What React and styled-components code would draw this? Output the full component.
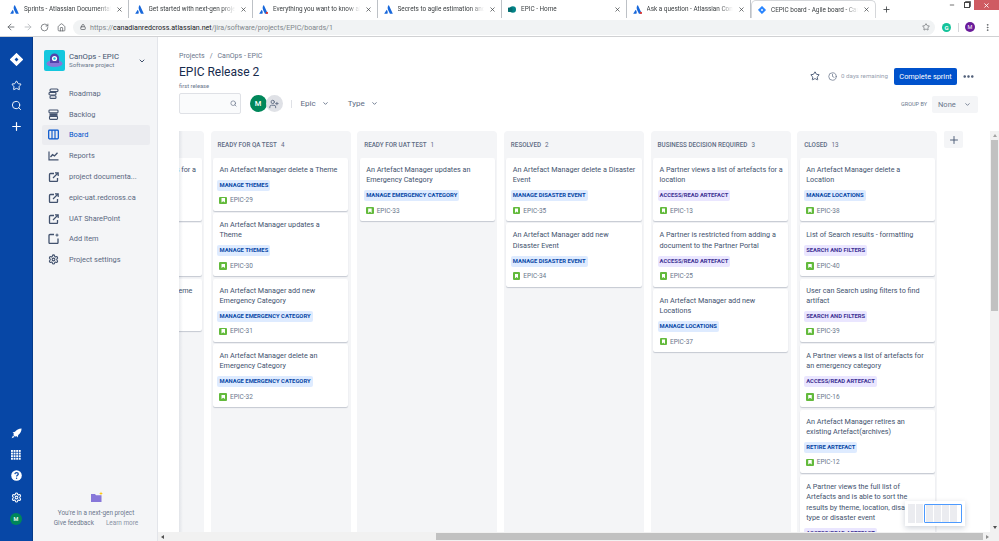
import React from 'react';
import styled, { createGlobalStyle } from 'styled-components';
import { ArrowLeft, ArrowRight, RotateCw, Home, Lock, Star, MoreVertical, MoreHorizontal, Plus, X, Search, ChevronDown, Settings, Minus, Clock, UserPlus } from 'lucide-react';

const Global = createGlobalStyle`
  html, body {
    margin: 0;
    padding: 0;
    height: 100%;
    overflow: hidden;
    background: #fff;
  }
  * { box-sizing: border-box; }
`;

const Page = styled.div`
  width: 999px;
  height: 541px;
  display: flex;
  flex-direction: column;
  overflow: hidden;
  font-family: Roboto, "Noto Sans", sans-serif;
  color: #42526e;
  filter: blur(0.4px);
`;

/* browser chrome */
const TabStrip = styled.div`
  height: 18px;
  display: flex;
  align-items: stretch;
  padding-left: 4px;
  background: #fff;
  flex: none;
`;
const Tab = styled.div`
  width: 124.5px;
  padding: 0 5px 0 6px;
  display: flex;
  align-items: center;
  gap: 5px;
  font-size: 6.4px;
  color: #3c4043;
  white-space: nowrap;
  border-right: 1px solid ${p => (p.$active ? 'transparent' : '#bdc1c6')};
  ${p => p.$active && 'border: 1px solid #d5d7da; border-bottom: none; border-radius: 5px 5px 0 0;'}
`;
const TabTitle = styled.span`
  flex: 1;
  overflow: hidden;
  -webkit-mask-image: linear-gradient(to right, #000 85%, transparent);
  mask-image: linear-gradient(to right, #000 85%, transparent);
`;
const NewTab = styled.div`
  width: 22px;
  display: flex;
  align-items: center;
  justify-content: center;
  color: #3c4043;
`;
const WindowControls = styled.div`
  margin-left: auto;
  display: flex;
  align-items: flex-start;
  color: #555;
`;
const WinButton = styled.div`
  width: ${p => (p.$close ? '25px' : '15px')};
  height: 10px;
  display: flex;
  align-items: center;
  justify-content: center;
  color: ${p => (p.$close ? '#fff' : '#444')};
  background: ${p => (p.$close ? '#cf5b62' : 'transparent')};
`;
const RestoreGlyph = styled.span`
  width: 6px;
  height: 6px;
  border: 1px solid #444;
  box-shadow: 1px -1px 0 -0.2px #444;
`;
const Toolbar = styled.div`
  height: 19px;
  flex: none;
  display: flex;
  align-items: center;
  padding: 0 6px 0 3px;
  background: #fff;
  border-bottom: 1px solid #d0d1d3;
`;
const NavButton = styled.div`
  width: 16.6px;
  display: flex;
  justify-content: center;
  color: ${p => (p.$off ? '#b5b8bc' : '#5f6368')};
`;
const Omnibox = styled.div`
  flex: 1;
  height: 15px;
  margin-left: 3.6px;
  border-radius: 8px;
  background: #f1f3f4;
  display: flex;
  align-items: center;
  padding: 0 5px 0 7px;
  gap: 4px;
  font-size: 7.1px;
  color: #80868b;
  white-space: nowrap;
`;
const Host = styled.span`
  color: #202124;
`;
const UrlStar = styled.div`
  margin-left: auto;
  display: flex;
  color: #5f6368;
`;
const ToolbarRight = styled.div`
  width: 58px;
  display: flex;
  align-items: center;
  padding-left: 7px;
  color: #5f6368;
`;
const Grammarly = styled.div`
  width: 9px;
  height: 9px;
  border-radius: 50%;
  background: #15c39a;
  color: #fff;
  font-size: 6px;
  font-weight: 700;
  line-height: 9px;
  text-align: center;
`;
const ToolbarSep = styled.div`
  width: 1px;
  height: 9px;
  background: #d5d7da;
  margin: 0 6.5px;
`;
const ProfileDot = styled.div`
  width: 10px;
  height: 10px;
  border-radius: 50%;
  background: #6a1b9a;
  color: #fff;
  font-size: 5.5px;
  line-height: 10px;
  text-align: center;
  margin-right: 8px;
`;

/* app shell */
const Shell = styled.div`
  flex: 1;
  min-height: 0;
  display: flex;
`;
const Rail = styled.nav`
  width: 33px;
  flex: none;
  background: #0747a6;
  border-right: 1px solid #053a8a;
  display: flex;
  flex-direction: column;
  justify-content: space-between;
  align-items: center;
  padding: 16px 0 16px;
  color: #fff;
`;
const RailGroup = styled.div`
  display: flex;
  flex-direction: column;
  align-items: center;
  gap: ${p => p.$gap}px;
`;
const RailLogo = styled.div`
  display: flex;
  margin-bottom: 5px;
`;
const RailAvatar = styled.div`
  width: 12px;
  height: 12px;
  border-radius: 50%;
  background: #00875a;
  color: #fff;
  font-size: 5.5px;
  font-weight: 500;
  line-height: 12px;
  text-align: center;
`;
const Sidebar = styled.aside`
  width: 125px;
  flex: none;
  background: #f4f5f7;
  border-right: 1px solid #e3e5ea;
  padding: 13px 7px 0 9px;
  display: flex;
  flex-direction: column;
`;
const ProjectHead = styled.div`
  display: flex;
  align-items: center;
  padding-left: 2px;
  margin-bottom: 12.3px;
`;
const ProjectIcon = styled.div`
  width: 21px;
  height: 21px;
  flex: none;
  border-radius: 2px;
  background: #14c7de;
  margin-right: 4px;
`;
const ProjectText = styled.div`
  flex: 1;
  line-height: 8px;
`;
const ProjectName = styled.div`
  font-size: 7.8px;
  color: #42526e;
`;
const ProjectType = styled.div`
  font-size: 6.2px;
  color: #6b778c;
`;
const ProjectChevron = styled.div`
  display: flex;
  color: #42526e;
  margin-right: 4px;
`;
const NavList = styled.div`
  display: flex;
  flex-direction: column;
  gap: 0.8px;
`;
const NavItem = styled.div`
  height: 20px;
  display: flex;
  align-items: center;
  gap: 10px;
  padding-left: 6px;
  border-radius: 2px;
  font-size: 7.4px;
  white-space: nowrap;
  color: ${p => (p.$active ? '#0052cc' : '#5a6881')};
  background: ${p => (p.$active ? '#ebecf0' : 'transparent')};
`;
const NavIcon = styled.svg`
  width: 11px;
  height: 11px;
  flex: none;
  color: ${p => (p.$active ? '#0052cc' : '#42526e')};
`;
const SideFooter = styled.div`
  margin-top: auto;
  padding-bottom: 13.5px;
  display: flex;
  flex-direction: column;
  align-items: center;
  font-size: 6.4px;
  color: #6b778c;
  line-height: 10px;
`;
const FooterNote = styled.div`
  margin-top: 5px;
`;
const FooterLinks = styled.div`
  display: flex;
  gap: 12px;
`;
const FooterLink = styled.span`
  color: ${p => (p.$light ? '#8993a4' : '#6b778c')};
`;

/* main area */
const Main = styled.main`
  flex: 1;
  min-width: 0;
  min-height: 0;
  display: flex;
  flex-direction: column;
  background: #fff;
`;
const Header = styled.header`
  height: 94px;
  flex: none;
  padding: 14px 27px 0 21px;
  display: flex;
  justify-content: space-between;
`;
const HeaderLeft = styled.div`
  display: flex;
  flex-direction: column;
`;
const Crumbs = styled.div`
  font-size: 7px;
  line-height: 10px;
  color: #6b778c;
  display: flex;
  gap: 5px;
`;
const Title = styled.h1`
  margin: 4px 0 0;
  font-size: 12px;
  font-weight: 400;
  line-height: 14px;
  color: #172b4d;
`;
const SubTitle = styled.div`
  margin-top: 2.5px;
  font-size: 5.8px;
  line-height: 8px;
  color: #6b778c;
`;
const Filters = styled.div`
  margin-top: 3.5px;
  display: flex;
  align-items: center;
`;
const SearchBox = styled.div`
  width: 62px;
  height: 21px;
  border: 1px solid #dfe1e6;
  border-radius: 2px;
  background: #fafbfc;
  display: flex;
  align-items: center;
  justify-content: flex-end;
  padding-right: 3px;
  color: #6b778c;
  margin-right: 8.5px;
`;
const Avatar = styled.div`
  width: 17px;
  height: 17px;
  border-radius: 50%;
  background: #00875a;
  color: #fff;
  font-size: 7.5px;
  font-weight: 500;
  line-height: 17px;
  text-align: center;
`;
const AddPeople = styled.div`
  width: 17px;
  height: 17px;
  margin-left: -1px;
  border-radius: 50%;
  background: #dfe1e6;
  color: #6b778c;
  display: flex;
  align-items: center;
  justify-content: center;
`;
const FilterDivider = styled.div`
  width: 1px;
  height: 8px;
  background: #dfe1e6;
  margin: 0 9px 0 8px;
`;
const FilterButton = styled.div`
  display: flex;
  align-items: center;
  gap: 6.5px;
  font-size: 8px;
  color: #5e6c84;
  margin-right: 18.5px;
`;
const HeaderRight = styled.div`
  display: flex;
  flex-direction: column;
  align-items: flex-end;
  padding-top: 16.5px;
`;
const Actions = styled.div`
  display: flex;
  align-items: center;
`;
const Remaining = styled.div`
  display: flex;
  align-items: center;
  gap: 4px;
  margin-left: 8px;
  font-size: 6.2px;
  color: #97a0af;
`;
const Primary = styled.div`
  width: 63px;
  height: 17px;
  margin-left: 6px;
  border-radius: 2px;
  background: #0052cc;
  color: #fff;
  font-size: 7.4px;
  line-height: 17px;
  text-align: center;
`;
const More = styled.div`
  display: flex;
  margin-left: 4.5px;
  margin-right: -2.5px;
  color: #42526e;
`;
const GroupBy = styled.div`
  margin-top: 11px;
  display: flex;
  align-items: center;
  gap: 5px;
  font-size: 5.5px;
  color: #6b778c;
  margin-right: -6px;
`;
const NoneSelect = styled.div`
  width: 46px;
  height: 17px;
  border-radius: 2px;
  background: #f4f5f7;
  font-size: 7.5px;
  color: #6b778c;
  display: flex;
  align-items: center;
  justify-content: space-between;
  padding: 0 7px 0 6px;
`;

const MainWrap = styled.div`
  flex: 1;
  min-height: 0;
  position: relative;
  display: flex;
`;
const BoardRow = styled.div`
  flex: 1;
  min-width: 0;
  min-height: 0;
  display: flex;
`;
const Gutter = styled.div`
  width: ${p => p.$width}px;
  flex: none;
`;
const Board = styled.div`
  flex: 1;
  min-width: 0;
  display: flex;
  align-items: stretch;
  gap: 6.7px;
  overflow: hidden;
  position: relative;
  &::before {
    content: "";
    position: absolute;
    z-index: 1;
    left: 0;
    top: 0;
    bottom: 0;
    width: 4px;
    background: linear-gradient(to right, rgba(9, 30, 66, 0.08), transparent);
  }
`;
const Column = styled.section`
  width: 140px;
  flex: none;
  background: #f4f5f7;
  border-radius: 4px 4px 0 0;
  padding: 0 2.3px;
  overflow: hidden;
  &:first-child {
    margin-left: -115px;
  }
`;
const ColumnHead = styled.div`
  height: 27px;
  padding-left: 4.5px;
  display: flex;
  align-items: center;
  gap: 4px;
  font-size: 6.3px;
  font-weight: 500;
  color: #5e6c84;
  white-space: nowrap;
`;
const ColumnCount = styled.span`
  font-weight: 400;
`;
const CardStack = styled.div`
  display: flex;
  flex-direction: column;
  gap: 2.3px;
`;
const Card = styled.article`
  flex: none;
  background: #fff;
  border-radius: 2px;
  box-shadow: 0 1px 1px rgba(9, 30, 66, 0.2);
  padding: 7px 5.2px 6px 4.5px;
`;
const CardTitle = styled.div`
  padding-left: 2px;
  font-size: 7.22px;
  line-height: 10.35px;
  color: #42526e;
`;
const Tag = styled.div`
  width: fit-content;
  margin-top: 4.5px;
  height: 11px;
  padding: 0 2px;
  border-radius: 2px;
  font-size: 5.85px;
  font-weight: 700;
  line-height: 11px;
  white-space: nowrap;
  color: ${p => (p.$tone === 'purple' ? '#403294' : '#0747a6')};
  background: ${p => (p.$tone === 'purple' ? '#eae6ff' : '#deebff')};
`;
const CardKey = styled.div`
  margin-top: 5px;
  padding-left: 2px;
  height: 9px;
  display: flex;
  align-items: center;
  gap: 3px;
  font-size: 6.5px;
  color: #6b778c;
`;
const StoryIcon = styled.span`
  width: 7.5px;
  height: 7.5px;
  flex: none;
  border-radius: 1px;
  background: #63ba3c;
  position: relative;
  &::after {
    content: "";
    position: absolute;
    left: 2px;
    top: 1.5px;
    width: 3.5px;
    height: 4.5px;
    background: #fff;
    clip-path: polygon(0 0, 100% 0, 100% 100%, 50% 70%, 0 100%);
  }
`;
const AddColumn = styled.div`
  width: 19px;
  height: 17px;
  flex: none;
  border-radius: 2px;
  background: #f4f5f7;
  display: flex;
  align-items: center;
  justify-content: center;
  color: #42526e;
`;
const VScroll = styled.div`
  width: 9px;
  flex: none;
  background: #f1f1f1;
  display: flex;
  flex-direction: column;
  align-items: center;
`;
const Arrow = styled.span`
  width: 0;
  height: 0;
  border-left: 2px solid transparent;
  border-right: 2px solid transparent;
  ${p => (p.$down ? 'border-top: 3px solid #505050;' : 'border-bottom: 3px solid #a3a3a3;')}
  margin: ${p => (p.$down ? 'auto 0 3px' : '3px 0 2px')};
`;
const VThumb = styled.div`
  width: 7px;
  height: 171px;
  margin-top: 1px;
  background: #c1c1c1;
`;
const HScroll = styled.div`
  height: 9px;
  flex: none;
  background: #f1f1f1;
  display: flex;
  align-items: center;
`;
const HArrow = styled.span`
  width: 0;
  height: 0;
  margin: 0 3px;
  border-top: 2px solid transparent;
  border-bottom: 2px solid transparent;
  ${p => (p.$right ? 'border-left: 3px solid #8c8c8c;' : 'border-right: 3px solid #505050;')}
`;
const HThumb = styled.div`
  height: 7px;
  width: 547px;
  margin-left: auto;
  background: #c1c1c1;
`;
const MiniMap = styled.div`
  position: absolute;
  right: 34px;
  bottom: 6px;
  width: 60px;
  height: 25px;
  padding: 3px;
  display: flex;
  gap: 1.5px;
  background: #fff;
  box-shadow: 0 2px 6px rgba(9, 30, 66, 0.2);
  z-index: 2;
`;
const MiniCol = styled.div`
  width: 6.6px;
  background: #ebecf0;
`;
const MiniView = styled.div`
  flex: 1;
  padding: 0 1px;
  display: flex;
  gap: 1.5px;
  border: 1px solid #4c9aff;
  border-radius: 1px;
`;

const tabs = [
  'Sprints - Atlassian Documentation',
  'Get started with next-gen projects',
  'Everything you want to know about',
  'Secrets to agile estimation and story',
];

const themes = 'MANAGE THEMES';
const emergency = 'MANAGE EMERGENCY CATEGORY';
const disaster = 'MANAGE DISASTER EVENT';
const locations = 'MANAGE LOCATIONS';
const access = 'ACCESS/READ ARTEFACT';
const search = 'SEARCH AND FILTERS';

const columns = [
  { name: '', count: '', cards: [
    ['A Partner views a list of artefacts for a location', access, 'EPIC-14', 'purple'],
    ['A Partner views a Disaster Event', access, 'EPIC-15', 'purple'],
    ['An Artefact Manager add new Theme', themes, 'EPIC-28'],
  ] },
  { name: 'READY FOR QA TEST', count: 4, cards: [
    ['An Artefact Manager delete a Theme', themes, 'EPIC-29'],
    ['An Artefact Manager updates a Theme', themes, 'EPIC-30'],
    ['An Artefact Manager add new Emergency Category', emergency, 'EPIC-31'],
    ['An Artefact Manager delete an Emergency Category', emergency, 'EPIC-32'],
  ] },
  { name: 'READY FOR UAT TEST', count: 1, cards: [
    ['An Artefact Manager updates an Emergency Category', emergency, 'EPIC-33'],
  ] },
  { name: 'RESOLVED', count: 2, cards: [
    ['An Artefact Manager delete a Disaster Event', disaster, 'EPIC-35'],
    ['An Artefact Manager add new Disaster Event', disaster, 'EPIC-34'],
  ] },
  { name: 'BUSINESS DECISION REQUIRED', count: 3, cards: [
    ['A Partner views a list of artefacts for a location', access, 'EPIC-13', 'purple'],
    ['A Partner is restricted from adding a document to the Partner Portal', access, 'EPIC-25', 'purple'],
    ['An Artefact Manager add new Locations', locations, 'EPIC-37'],
  ] },
  { name: 'CLOSED', count: 13, cards: [
    ['An Artefact Manager delete a Location', locations, 'EPIC-38'],
    ['List of Search results - formatting', search, 'EPIC-40', 'purple'],
    ['User can Search using filters to find artifact', search, 'EPIC-39', 'purple'],
    ['A Partner views a list of artefacts for an emergency category', access, 'EPIC-16', 'purple'],
    ['An Artefact Manager retires an existing Artefact(archives)', 'RETIRE ARTEFACT', 'EPIC-12'],
    ['A Partner views the full list of Artefacts and is able to sort the results by theme, location, disaster type or disaster event', access, 'EPIC-11', 'purple'],
  ] },
];

const externalLink = (
  <>
    <path d="M6 2.5H2.5a1 1 0 0 0-1 1v6a1 1 0 0 0 1 1h6a1 1 0 0 0 1-1V7" fill="none" stroke="currentColor" strokeWidth="1.3" />
    <path d="M5 7l5-5M7 1.8h3.2V5" fill="none" stroke="currentColor" strokeWidth="1.2" />
  </>
);

const navItems = [
  ['Roadmap', (
    <>
      <rect x="2" y="1" width="8" height="2.6" rx="1" fill="none" stroke="currentColor" strokeWidth="1.1" />
      <rect x="1" y="4.4" width="7" height="2.6" rx="1" fill="none" stroke="currentColor" strokeWidth="1.1" />
      <rect x="2" y="7.8" width="6" height="2.6" rx="1" fill="none" stroke="currentColor" strokeWidth="1.1" />
    </>
  )],
  ['Backlog', (
    <>
      <rect x="1" y="1" width="9" height="2.8" rx="0.8" fill="none" stroke="currentColor" strokeWidth="1.1" />
      <rect x="1.5" y="4.3" width="8" height="2.6" fill="currentColor" />
      <rect x="1.5" y="7.4" width="8" height="3" rx="0.8" fill="none" stroke="currentColor" strokeWidth="1.1" />
    </>
  )],
  ['Board', (
    <>
      <rect x="0.7" y="1.2" width="9.6" height="8.6" rx="0.8" fill="none" stroke="currentColor" strokeWidth="1.2" />
      <path d="M4 1.2v8.6M7 1.2v8.6" stroke="currentColor" strokeWidth="1.1" />
    </>
  ), true],
  ['Reports', (
    <>
      <path d="M1 1.5v8.3h9.5" fill="none" stroke="currentColor" strokeWidth="1.2" />
      <path d="M2.5 7l2-2.3 2 1.2 3-3.2" fill="none" stroke="currentColor" strokeWidth="1.3" />
    </>
  )],
  ['project documenta...', externalLink],
  ['epic-uat.redcross.ca', externalLink],
  ['UAT SharePoint', externalLink],
  ['Add item', (
    <>
      <path d="M6 1.5H2a1 1 0 0 0-1 1v7a1 1 0 0 0 1 1h7a1 1 0 0 0 1-1V5.5" fill="none" stroke="currentColor" strokeWidth="1.3" />
      <path d="M9 .6v3M7.5 2.1h3" stroke="currentColor" strokeWidth="1" />
    </>
  )],
];

function AtlassianMark({ dot }) {
  return (
    <svg width="9" height="9" viewBox="0 0 10 10">
      <path d="M3 5.2 0.2 9.6h3.6c.7-1.4.4-3-.8-4.4z" fill="#1868db" />
      <path d="M5 .4C3.7 2.3 3.8 4.2 4.8 6l1.8 3.6h3.2L5.6.5c-.2-.3-.4-.3-.6-.1z" fill="#1868db" />
      {dot && <circle cx="8.8" cy="8.8" r="1.2" fill="#e5352b" />}
    </svg>
  );
}

function JiraDiamond({ size, color, hole }) {
  return (
    <svg width={size} height={size} viewBox="0 0 12 12">
      <path d="M6 .5 11.5 6 6 11.5.5 6z" fill={color} strokeLinejoin="round" stroke={color} strokeWidth="1" />
      <path d="M6 4.2 7.8 6 6 7.8 4.2 6z" fill={hole} />
    </svg>
  );
}

function ProjectArt() {
  return (
    <ProjectIcon>
      <svg width="21" height="21" viewBox="0 0 21 21">
        <ellipse cx="10.5" cy="13.5" rx="8" ry="3.6" fill="#8777d9" />
        <path d="M6 13V8a4.5 4.5 0 0 1 9 0v5z" fill="#5243aa" />
        <circle cx="10.5" cy="8.5" r="2.6" fill="#fff" />
        <circle cx="10.5" cy="8.5" r="1.2" fill="#14c7de" />
      </svg>
    </ProjectIcon>
  );
}

function App() {
  return (
    <Page>
      <Global />
      <TabStrip>
        {tabs.map((title, i) => (
          <Tab key={title}>
            <AtlassianMark dot={i === 2} />
            <TabTitle>{title}</TabTitle>
            <X size={7} strokeWidth={2.4} />
          </Tab>
        ))}
        <Tab>
          <svg width="8" height="9" viewBox="0 0 10 10">
            <circle cx="6" cy="5" r="4" fill="#038387" />
            <rect x="0" y="2.5" width="5.5" height="5.5" rx="0.6" fill="#036c70" />
          </svg>
          <TabTitle>EPIC - Home</TabTitle>
          <X size={7} strokeWidth={2.4} />
        </Tab>
        <Tab>
          <AtlassianMark dot />
          <TabTitle>Ask a question - Atlassian Community</TabTitle>
          <X size={7} strokeWidth={2.4} />
        </Tab>
        <Tab $active>
          <JiraDiamond size={8} color="#2684ff" hole="#fff" />
          <TabTitle>CEPIC board - Agile board - CanOps</TabTitle>
          <X size={7} strokeWidth={2.4} />
        </Tab>
        <NewTab><Plus size={9} strokeWidth={2.2} /></NewTab>
        <WindowControls>
          <WinButton><Minus size={6} strokeWidth={3} /></WinButton>
          <WinButton><RestoreGlyph /></WinButton>
          <WinButton $close><X size={7} strokeWidth={3} /></WinButton>
        </WindowControls>
      </TabStrip>
      <Toolbar>
        <NavButton><ArrowLeft size={10} strokeWidth={2} /></NavButton>
        <NavButton $off><ArrowRight size={10} strokeWidth={2} /></NavButton>
        <NavButton><RotateCw size={9} strokeWidth={2} /></NavButton>
        <NavButton><Home size={9} strokeWidth={2} /></NavButton>
        <Omnibox>
          <Lock size={6} strokeWidth={3} color="#5f6368" />
          <span>https://<Host>canadianredcross.atlassian.net</Host>/jira/software/projects/EPIC/boards/1</span>
          <UrlStar><Star size={8} strokeWidth={2} /></UrlStar>
        </Omnibox>
        <ToolbarRight>
          <Grammarly>G</Grammarly>
          <ToolbarSep />
          <ProfileDot>M</ProfileDot>
          <MoreVertical size={9} strokeWidth={2.4} />
        </ToolbarRight>
      </Toolbar>
      <Shell>
        <Rail>
          <RailGroup $gap={9}>
            <RailLogo><JiraDiamond size={13} color="#fff" hole="#0747a6" /></RailLogo>
            <Star size={11} strokeWidth={2} />
            <Search size={11} strokeWidth={2} />
            <Plus size={13} strokeWidth={2.2} />
          </RailGroup>
          <RailGroup $gap={10.5}>
            <svg width="11" height="11" viewBox="0 0 10 10">
              <path d="M9.6.4C7 .4 5 1.6 3.6 3.4L1.4 4l1.3 1.2-.6 1.1 1.6 1.6 1.1-.6L6 8.6l.6-2.2C8.4 5 9.6 3 9.6.4z" fill="#fff" />
              <path d="M1.8 6.8.6 9.4l2.6-1.2z" fill="#fff" />
            </svg>
            <svg width="10" height="10" viewBox="0 0 10 10" fill="#fff">
              {[0, 1, 2, 3].flatMap(r => [0, 1, 2, 3].map(c => (
                <rect key={`${r}${c}`} x={c * 2.6} y={r * 2.6} width="1.9" height="1.9" />
              )))}
            </svg>
            <svg width="11" height="11" viewBox="0 0 11 11">
              <circle cx="5.5" cy="5.5" r="5.3" fill="#fff" />
              <path d="M3.8 4.2c.2-1 1-1.5 1.8-1.5 1 0 1.7.6 1.7 1.4 0 1.2-1.7 1.2-1.7 2.4" fill="none" stroke="#0747a6" strokeWidth="1.2" />
              <circle cx="5.6" cy="8.2" r=".7" fill="#0747a6" />
            </svg>
            <Settings size={11} strokeWidth={2.2} />
            <RailAvatar>M</RailAvatar>
          </RailGroup>
        </Rail>
        <Sidebar>
          <ProjectHead>
            <ProjectArt />
            <ProjectText>
              <ProjectName>CanOps - EPIC</ProjectName>
              <ProjectType>Software project</ProjectType>
            </ProjectText>
            <ProjectChevron><ChevronDown size={8} strokeWidth={3} /></ProjectChevron>
          </ProjectHead>
          <NavList>
            {navItems.map(([label, icon, active]) => (
              <NavItem key={label} $active={active}>
                <NavIcon $active={active} viewBox="0 0 11 11">{icon}</NavIcon>
                {label}
              </NavItem>
            ))}
            <NavItem>
              <Settings size={11} strokeWidth={2.4} color="#42526e" />
              Project settings
            </NavItem>
          </NavList>
          <SideFooter>
            <svg width="13" height="12" viewBox="0 0 13 12">
              <path d="M1 3h4l1 1.2h5.5V11H1z" fill="#8777d9" />
              <path d="M11 .5l.5 1.5 1.5.5-1.5.5-.5 1.5-.5-1.5L9 2.5l1.5-.5z" fill="#ffc400" />
            </svg>
            <FooterNote>You're in a next-gen project</FooterNote>
            <FooterLinks>
              <FooterLink>Give feedback</FooterLink>
              <FooterLink $light>Learn more</FooterLink>
            </FooterLinks>
          </SideFooter>
        </Sidebar>
        <Main>
          <Header>
            <HeaderLeft>
              <Crumbs><span>Projects</span><span>/</span><span>CanOps - EPIC</span></Crumbs>
              <Title>EPIC Release 2</Title>
              <SubTitle>first release</SubTitle>
              <Filters>
                <SearchBox><Search size={7} strokeWidth={2.4} /></SearchBox>
                <Avatar>M</Avatar>
                <AddPeople><UserPlus size={10} strokeWidth={2.4} /></AddPeople>
                <FilterDivider />
                <FilterButton>Epic <ChevronDown size={7} strokeWidth={3} /></FilterButton>
                <FilterButton>Type <ChevronDown size={7} strokeWidth={3} /></FilterButton>
              </Filters>
            </HeaderLeft>
            <HeaderRight>
              <Actions>
                <Star size={10} strokeWidth={2.2} color="#42526e" />
                <Remaining><Clock size={9} strokeWidth={2} color="#6b778c" />0 days remaining</Remaining>
                <Primary>Complete sprint</Primary>
                <More><MoreHorizontal size={13} strokeWidth={2.6} /></More>
              </Actions>
              <GroupBy>
                GROUP BY
                <NoneSelect>None <ChevronDown size={7} strokeWidth={3} /></NoneSelect>
              </GroupBy>
            </HeaderRight>
          </Header>
          <MainWrap>
            <BoardRow>
              <Gutter $width={21} />
              <Board>
                {columns.map(col => (
                  <Column key={col.name || 'clipped'}>
                    <ColumnHead>{col.name}<ColumnCount>{col.count}</ColumnCount></ColumnHead>
                    <CardStack>
                      {col.cards.map(([title, tag, key, tone]) => (
                        <Card key={key}>
                          <CardTitle>{title}</CardTitle>
                          <Tag $tone={tone}>{tag}</Tag>
                          <CardKey><StoryIcon />{key}</CardKey>
                        </Card>
                      ))}
                    </CardStack>
                  </Column>
                ))}
                <AddColumn><Plus size={12} strokeWidth={1.8} /></AddColumn>
              </Board>
              <VScroll>
                <Arrow />
                <VThumb />
                <Arrow $down />
              </VScroll>
            </BoardRow>
            <MiniMap>
              <MiniCol />
              <MiniCol />
              <MiniView>
                <MiniCol />
                <MiniCol />
                <MiniCol />
                <MiniCol />
              </MiniView>
            </MiniMap>
          </MainWrap>
          <HScroll>
            <HArrow />
            <HThumb />
            <HArrow $right />
            <Gutter $width={7} />
          </HScroll>
        </Main>
      </Shell>
    </Page>
  );
}

export default App;
